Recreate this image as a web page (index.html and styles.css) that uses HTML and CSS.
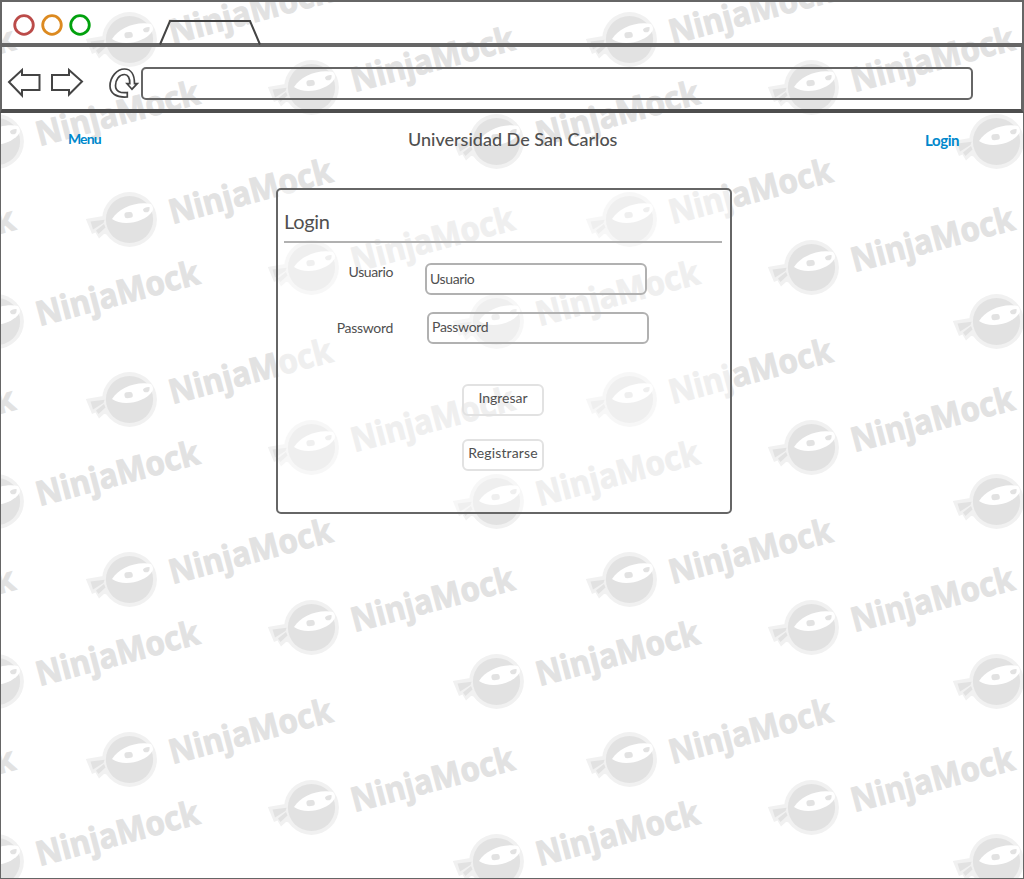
FILE: index.html
```
<!DOCTYPE html>
<html lang="es">
<head>
<meta charset="utf-8">
<title>Universidad De San Carlos</title>
<link rel="stylesheet" href="styles.css">
</head>
<body>
<svg class="watermark" width="1024" height="879" aria-hidden="true">
  <defs>
    <g id="mark">
      <g fill="#f1f1f1">
        <circle r="27.4"/>
        <path d="M-43.7-.5L-25-3.8-21 15-25.5 14.5-30.5 19-34 13-37.5 14.5Z"/>
      </g>
      <g fill="#e2e2e2">
        <circle r="23.6"/>
        <path d="M-39 2L-25 .2-26 3.5-36.5 10ZM-25.5 4.5L-33.5 11-31 14.5-24 8Z"/>
      </g>
      <path fill="#fff" d="M-17.500-.5C-11-11 6-18.500 21.500-15.500Q24.500-12 23-8.500C15 3.500-7 7-17.500-.5Z"/>
      <g fill="#e2e2e2">
        <rect x="-4.500" y="-7.500" width="8.300" height="6" rx="2.600" transform="rotate(-7)"/>
        <path d="M13.500-10Q15-12.800 20-12.600 20.600-8.500 18-7.300 14-6.500 13.500-10Z"/>
      </g>
      <text class="mark-name" x="0" y="0" textLength="167.500" lengthAdjust="spacingAndGlyphs" transform="translate(43 4.800) rotate(-14.900)">NinjaMock</text>
    </g>
    <g id="row">
      <use href="#mark" x="-188" y="87.500"/>
      <use href="#mark" x="-3.500" y="141.500"/>
      <use href="#mark" x="129.500" y="39.500"/>
      <use href="#mark" x="311.500" y="87.500"/>
      <use href="#mark" x="496.500" y="141.500"/>
      <use href="#mark" x="629.500" y="39.500"/>
      <use href="#mark" x="811.500" y="87.500"/>
      <use href="#mark" x="996.500" y="141.500"/>
    </g>
  </defs>
  <use href="#row"/>
  <use href="#row" y="180"/>
  <use href="#row" y="360"/>
  <use href="#row" y="540"/>
  <use href="#row" y="720"/>
</svg>
<div class="browser">
  <div class="tabs">
    <svg width="270" height="43" viewBox="2 2 270 43" fill="none">
      <g stroke-width="2.800">
        <circle cx="24" cy="25" r="9.300" stroke="#bb4b49"/>
        <circle cx="52" cy="25" r="9.300" stroke="#dc8a20"/>
        <circle cx="80" cy="25" r="9.300" stroke="#02a10e"/>
      </g>
      <path d="M160 44.500L170 21H250L260 44.500" stroke="#444" stroke-width="2"/>
    </svg>
  </div>
  <div class="toolbar">
    <svg width="139" height="62" viewBox="2 47 139 62" fill="none" stroke="#444" stroke-width="2">
      <path d="M9 82L22 70V75H39.500V90H22V95.500Z"/>
      <path d="M52 75H69V70L82 81.500 69 94.500V90H52Z"/>
      <path stroke-width="1.700" d="M127.300 97C116 98 110 93 110 86 110 77 117 69 124.500 69 131 69 134.500 75 134.500 83.700H137.300L132 89.200 127 83.700H129.800C130 78 128 74.500 124.500 74.500 119 74.500 115.500 80 115.500 85.500 115.500 91 120 93.500 127.300 92.500Z"/>
    </svg>
    <div class="address"></div>
  </div>
  <div class="page">
    <header class="top">
      <a class="link menu">Menu</a>
      <h1 class="site">Universidad De San Carlos</h1>
      <a class="link enter">Login</a>
    </header>
    <main class="panel">
      <h2 class="heading"><span>Login</span></h2>
      <div class="field user">
        <label class="label">Usuario</label>
        <div class="input">Usuario</div>
      </div>
      <div class="field pass">
        <label class="label">Password</label>
        <div class="input">Password</div>
      </div>
      <div class="actions">
        <div class="button ingresar">Ingresar</div>
        <div class="button registrarse">Registrarse</div>
      </div>
    </main>
  </div>
</div>
</body>
</html>
```

FILE: styles.css
```
* { box-sizing: border-box; }
body {
  margin: 0;
  background: #fff;
  color: #505050;
  font-family: Lato, "Open Sans", sans-serif;
  font-size: 14px;
}
.watermark { position: absolute; left: 0; top: 0; z-index: -1; }
.mark-name { font: bold 34px "Noto Sans", sans-serif; fill: #e2e2e2; stroke: #e2e2e2; stroke-width: .9px; }
.browser { width: 1024px; height: 879px; display: flex; flex-direction: column; overflow: hidden; }
.tabs { height: 47px; border: 2px solid #666; border-bottom-width: 4px; }
.tabs svg { display: block; }
.toolbar {
  height: 66px;
  display: flex;
  border: solid #666;
  border-width: 0 3px 4px 2px;
  border-bottom-color: #4e4e4e;
}
.toolbar svg { flex: none; }
.address { width: 832px; height: 33px; margin-top: 20px; border: 2px solid #666; border-radius: 5px; }
.page { flex: 1; border: 1px solid #666; border-top: 0; }
.top { height: 75px; padding: 14px 62px 0 67px; display: flex; }
.link { color: #08c; font-weight: bold; font-size: 14px; line-height: 24px; }
.menu { width: 33px; letter-spacing: -.9px; }
.enter { width: 36px; margin-left: auto; padding-top: 1px; font-size: 15px; letter-spacing: -.4px; }
.site { margin: 0 0 0 307px; font-size: 18px; line-height: 24px; font-weight: 500; white-space: nowrap; }
.panel {
  width: 456px;
  height: 326px;
  margin-left: 275px;
  padding: 0 8px 0 6px;
  border: 2px solid #666;
  border-radius: 5px;
  background: rgba(255, 255, 255, .45);
}
.heading { margin: 0; height: 53px; padding-top: 18px; border-bottom: 2px solid #b1b1b1; font-size: 20px; line-height: 26px; font-weight: normal; letter-spacing: -.3px; }
.field { display: flex; height: 32px; }
.user { margin-top: 20px; }
.pass { margin-top: 17px; }
.label { width: 109px; margin-right: 32px; text-align: right; line-height: 18px; letter-spacing: -.4px; }
.pass .label { margin-right: 34px; padding-top: 7px; letter-spacing: -.3px; }
.input { width: 222px; padding-left: 3px; border: 2px solid #b1b1b1; border-radius: 6px; line-height: 27px; letter-spacing: -.4px; }
.pass .input { line-height: 26px; letter-spacing: -.3px; }
.actions { margin: 40px 0 0 178px; display: grid; gap: 23px; width: 82px; }
.button { height: 32px; border: 2px solid #e2e2e2; border-radius: 6px; text-align: center; line-height: 24px; }
.registrarse { letter-spacing: .15px; }
```
